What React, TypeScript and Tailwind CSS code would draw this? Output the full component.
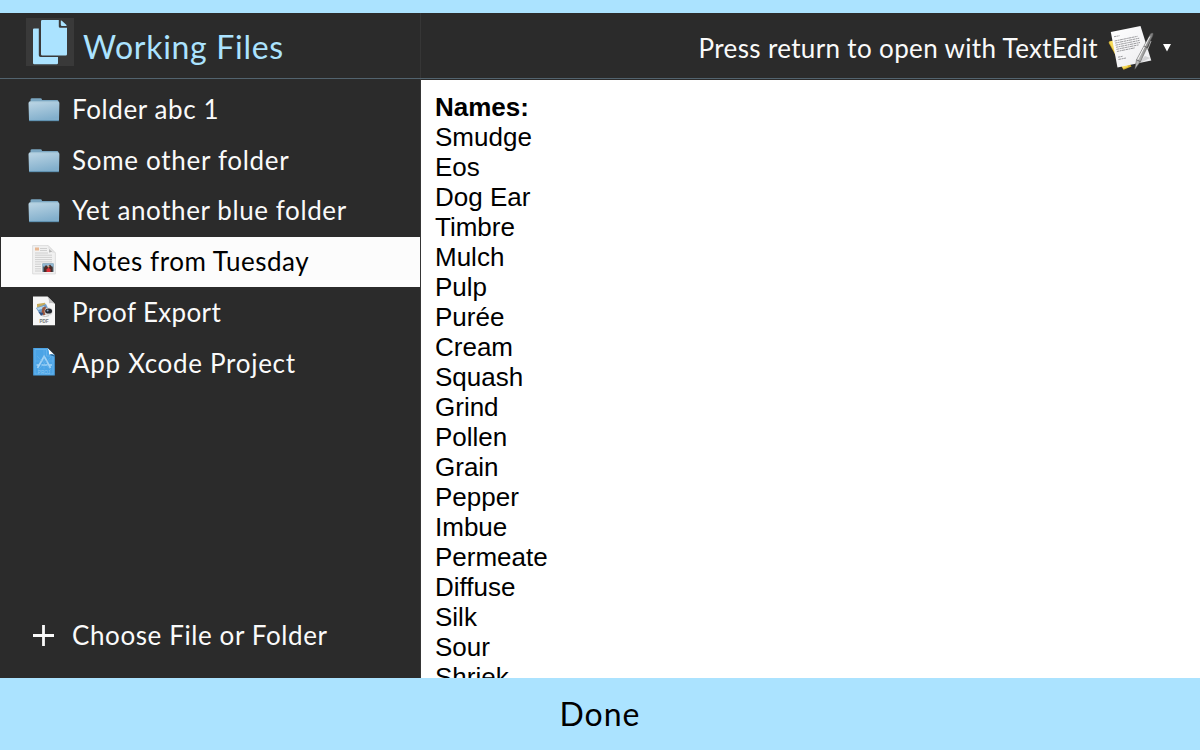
import type { ReactNode } from 'react';

function FilesIcon() {
  return (
    <svg width="48" height="48" viewBox="0 0 48 48" className="shrink-0 bg-[#393939]" fill="#abe3ff">
      <path d="M8 10.500h4.800v26.700q0 1.800 1.800 1.800H32v6q0 1.300-1.300 1.300H8.300Q7 46.300 7 45V11.500q0-1 1-1z" />
      <path d="M16.300 2H32.800v6.400q0 1.400 1.400 1.400H41v26.400q0 1.200-1.200 1.200H16.200q-1.200 0-1.200-1.200V3.200Q15 2 16.300 2z" />
      <path d="M34.800 2.500q.5-.3 1 .2l4.700 4.300q.5.800-.4.900h-4q-1.300 0-1.300-1.200z" />
    </svg>
  );
}

function FolderIcon() {
  return (
    <svg width="32" height="24" viewBox="0 0 32 24">
      <defs>
        <linearGradient id="folder" x1="0" y1="0" x2="0.3" y2="1">
          <stop offset="0" stopColor="#bdd6e5" />
          <stop offset="1" stopColor="#82afcc" />
        </linearGradient>
      </defs>
      <path d="M2.500 4V1.600Q2.600.3 4 .3h8.500q1.200 0 1.400 1.200l.2.600H29q1.400 0 1.400 1.400V6h-28z" fill="#7ba6c1" />
      <path d="M.5 5.300Q.5 3.600 2 3.600h28q1.500 0 1.400 1.700L31 22q0 1-1 1H2q-1 0-1-1z" fill="url(#folder)" />
      <path d="M1.500 3.900h29" stroke="#a9c8d9" strokeWidth=".7" />
      <path d="M1 22.700h30" stroke="#5689a8" strokeWidth=".9" />
    </svg>
  );
}

function NotesIcon() {
  return (
    <svg width="24" height="30" viewBox="0 0 24 30">
      <path d="M.6.600h15.500l7.300 7.300v21H.600z" fill="#f1f1f1" stroke="#d8d8d8" strokeWidth=".8" />
      <path d="M16 .6l7.400 7.400q-3-1.400-6.300-.6.400-3.800-1.100-6.800z" fill="#b5b5b5" />
      <path d="M16 .6l7.400 7.400h-2L16 3z" fill="#e7e7e7" />
      <rect x="3" y="2.500" width="4" height="3" fill="#e8b893" />
      <path d="M8 3.500h7M8 5.500h7M3 8h13M3 10.200h17M3 12.400h17M3 14.600h17M3 16.800h17M3 19.200h6M3 21.500h6M3 23.800h6M3 26h6" stroke="#c6c6c6" strokeWidth=".8" />
      <rect x="10.500" y="18.500" width="11" height="8.500" fill="#506c7d" />
      <path d="M10.500 18.500h11v3h-11z" fill="#90b8d3" />
      <path d="M12 23l2-3 2 2 2-2.500 2.500 3v4.500H12z" fill="#4a2c28" />
      <path d="M14.500 24.500l2-2 2 2v2.500h-4z" fill="#d82e36" />
      <circle cx="16.500" cy="21.500" r="1" fill="#d4a181" />
    </svg>
  );
}

function PdfIcon() {
  return (
    <svg width="24" height="30" viewBox="0 0 24 30">
      <path d="M1 .5h14.500L23 8v21.200H1z" fill="#f6f6f6" />
      <path d="M15.500.5L23 8q-3-1.500-6-.7.300-4-1.500-6.800z" fill="#c2c2c2" />
      <path d="M5 8l8-1.300 1 3-9 2z" fill="#c7ac5e" />
      <path d="M4 12l10-4 4 8-9 4z" fill="#6f9dca" />
      <path d="M5 12l7-2 1 2-7 2z" fill="#b7d8ed" />
      <path d="M10.500 11.500l3-1 2 7-4 2-2-3z" fill="#9b563c" />
      <path d="M6.500 16l5 1-2 3z" fill="#314d7d" />
      <circle cx="16.600" cy="15.500" r="4" fill="#dadada" />
      <ellipse cx="16.600" cy="15" rx="3.500" ry="2.600" fill="#24272e" />
      <circle cx="15.600" cy="14.500" r="1" fill="#879fc0" />
      <path d="M9.500 19.500q4 2 7.500.2" stroke="#bfc0c2" strokeWidth="1" fill="none" />
      <text x="12" y="27.300" textAnchor="middle" fontSize="4.600" fontWeight="700" fontFamily="Liberation Sans, sans-serif" fill="#777">PDF</text>
    </svg>
  );
}

function XcodeIcon() {
  return (
    <svg width="24" height="30" viewBox="0 0 24 30">
      <path d="M1.200 1h14.300l7.300 7.300V28.500H1.200z" fill="#4ba4e6" />
      <path d="M3 2.500h11.500V9h6.500v18H3z" fill="none" stroke="#72baf0" strokeWidth=".6" />
      <path d="M15.500 1l7.300 7.300q-3-1.600-5.600-.6.200-3.900-1.700-6.700z" fill="#fff" />
      <path d="M17.200 7.700q2.600-1 5.600.6v1.500z" fill="#2c6b9d" />
      <path d="M5.500 21l6.600-11.500 1.400 2.200L18.500 21M4.500 18h3.500M9.500 18h6M17 18h3" fill="none" stroke="#a3d3f6" strokeWidth="1.700" />
      <path d="M3 14h18M12 3v19M5 9l14 14M19 10L6 23" fill="none" stroke="#75baee" strokeWidth=".4" />
      <text x="12" y="26.500" textAnchor="middle" fontSize="4.600" fontFamily="Liberation Sans, sans-serif" fill="#91caf5">PROJ</text>
    </svg>
  );
}

function TextEditIcon() {
  return (
    <svg width="48" height="48" viewBox="0 0 48 48" className="shrink-0">
      <defs>
        <linearGradient id="paper" x1="0" y1="0" x2="1" y2="1">
          <stop offset="0" stopColor="#fff" />
          <stop offset="1" stopColor="#ececef" />
        </linearGradient>
        <linearGradient id="pen" x1="0" y1="0" x2="1" y2=".5">
          <stop offset="0" stopColor="#e9e9e9" />
          <stop offset=".5" stopColor="#b2b2b2" />
          <stop offset="1" stopColor="#4e4e4e" />
        </linearGradient>
      </defs>
      <path d="M.5 18.500l7-2 16 26-8 3.200z" fill="#d9b42d" />
      <path d="M1 17.500l7-1.500 12 27-5 1.500z" fill="#f5da5b" />
      <path d="M2.800 8L32.500 2 43.300 36.500 9.500 43.500z" fill="url(#paper)" />
      <g stroke="#8b8b8f" strokeWidth=".85" strokeDasharray="2.600 .5 1.500 .4 3.400 .5">
        <path d="M6 12.700l5.500-1" />
        <path d="M6.600 17L29.500 12.300M7.100 19.100L31.200 14.200M7.500 21.200L31.500 16.400M8 23.300L32 18.500M8.400 25.400L31 20.800M8.900 27.500L27 23.800" />
        <path d="M10 33.200l5-1M10.500 35.500l7.500-1.500" />
      </g>
      <path d="M29 40l8-8 5 2-8 4z" fill="#77777a" opacity=".25" />
      <path d="M26.800 45.300l1.700-9.500L40.800 13q2-4.800 3.800-4 1.500.9-1.200 5.600L32.500 37.500z" fill="url(#pen)" stroke="#555" strokeWidth=".5" />
      <path d="M29.500 36L41.800 12.500" stroke="#fff" strokeWidth=".9" />
      <path d="M28.600 35.800l3.800 1.900M36 22l3 1.600" stroke="#555" strokeWidth=".8" />
      <path d="M39.500 26l3.500-9" stroke="#bbb" strokeWidth=".9" />
    </svg>
  );
}

type Item = { label: string; icon: ReactNode; text: string; iconPad: string; selected?: boolean };

const items: Item[] = [
  { label: 'Folder abc 1', icon: <FolderIcon />, text: 'tracking-[0.6px]', iconPad: 'pb-0' },
  { label: 'Some other folder', icon: <FolderIcon />, text: 'tracking-[0.7px] pb-px', iconPad: 'pb-0' },
  { label: 'Yet another blue folder', icon: <FolderIcon />, text: 'tracking-[0.6px] pb-px', iconPad: 'pb-0' },
  { label: 'Notes from Tuesday', icon: <NotesIcon />, text: 'tracking-[0.53px] pb-[2px]', iconPad: 'pb-[4px]', selected: true },
  { label: 'Proof Export', icon: <PdfIcon />, text: 'tracking-[0.35px]', iconPad: 'pb-[3px]' },
  { label: 'App Xcode Project', icon: <XcodeIcon />, text: 'tracking-[0.7px] pb-px', iconPad: 'pb-[3px]' },
];

const names = [
  'Smudge', 'Eos', 'Dog Ear', 'Timbre', 'Mulch', 'Pulp', 'Purée', 'Cream', 'Squash', 'Grind',
  'Pollen', 'Grain', 'Pepper', 'Imbue', 'Permeate', 'Diffuse', 'Silk', 'Sour', 'Shriek',
];

export default function App() {
  return (
    <div className="flex h-[750px] w-[1200px] flex-col overflow-hidden bg-[#2b2b2b] font-['Lato',sans-serif] text-[26px] text-[#fafafa]">
      <div className="h-[13px] shrink-0 bg-[#abe3ff]" />
      <header className="flex h-[66px] shrink-0 border-b border-[#52636e]">
        <div className="flex w-[421px] border-r border-[#363636] pt-[5px] pl-[26px]">
          <FilesIcon />
          <h1 className="ml-[9px] pt-[9px] text-[32px] leading-[40px] tracking-[0.7px] whitespace-nowrap text-[#abe3ff]">Working Files</h1>
        </div>
        <div className="flex flex-1 justify-end pr-[29px]">
          <span className="pt-[18px] leading-[34px] tracking-[0.35px] whitespace-nowrap">Press return to open with TextEdit</span>
          <div className="ml-[10px] pt-[11px]"><TextEditIcon /></div>
          <svg width="8" height="8" viewBox="0 0 8 8" className="mt-[31px] ml-[7px]"><path d="M0 0h8L4 7.500z" fill="#fff" /></svg>
        </div>
      </header>
      <div className="flex h-[599px] shrink-0">
        <aside className="flex w-[421px] shrink-0 flex-col border-r border-[#363636] pt-[5.750px]">
          <ul className="flex flex-col gap-[0.750px]">
            {items.map((item) => (
              <li key={item.label} className={item.selected ? 'ml-px flex h-[50px] items-center bg-[#fcfcfc] pl-[26px] text-black' : 'flex h-[50px] items-center pl-[27px]'}>
                <div className={`flex w-[34px] justify-center ${item.iconPad}`}>{item.icon}</div>
                <span className={`ml-[11px] whitespace-nowrap ${item.text}`}>{item.label}</span>
              </li>
            ))}
          </ul>
          <div className="mt-auto mb-[18px] flex h-[50px] items-center pl-[33px]">
            <svg width="21" height="21" viewBox="0 0 21 21"><path d="M0 10.500h21M10.500 0v21" stroke="#fafafa" strokeWidth="2.800" /></svg>
            <span className="ml-[18px] tracking-[0.6px] whitespace-nowrap">Choose File or Folder</span>
          </div>
        </aside>
        <main className="mt-px flex-1 overflow-hidden bg-white pt-[12px] pl-[14px] font-['Liberation_Sans',sans-serif] text-[26px] leading-[30px] text-black">
          <p className="font-bold">Names:</p>
          {names.map((name) => <p key={name}>{name}</p>)}
        </main>
      </div>
      <button className="h-[72px] w-full shrink-0 bg-[#abe3ff] text-[32px] tracking-[1px] text-black">Done</button>
    </div>
  );
}
